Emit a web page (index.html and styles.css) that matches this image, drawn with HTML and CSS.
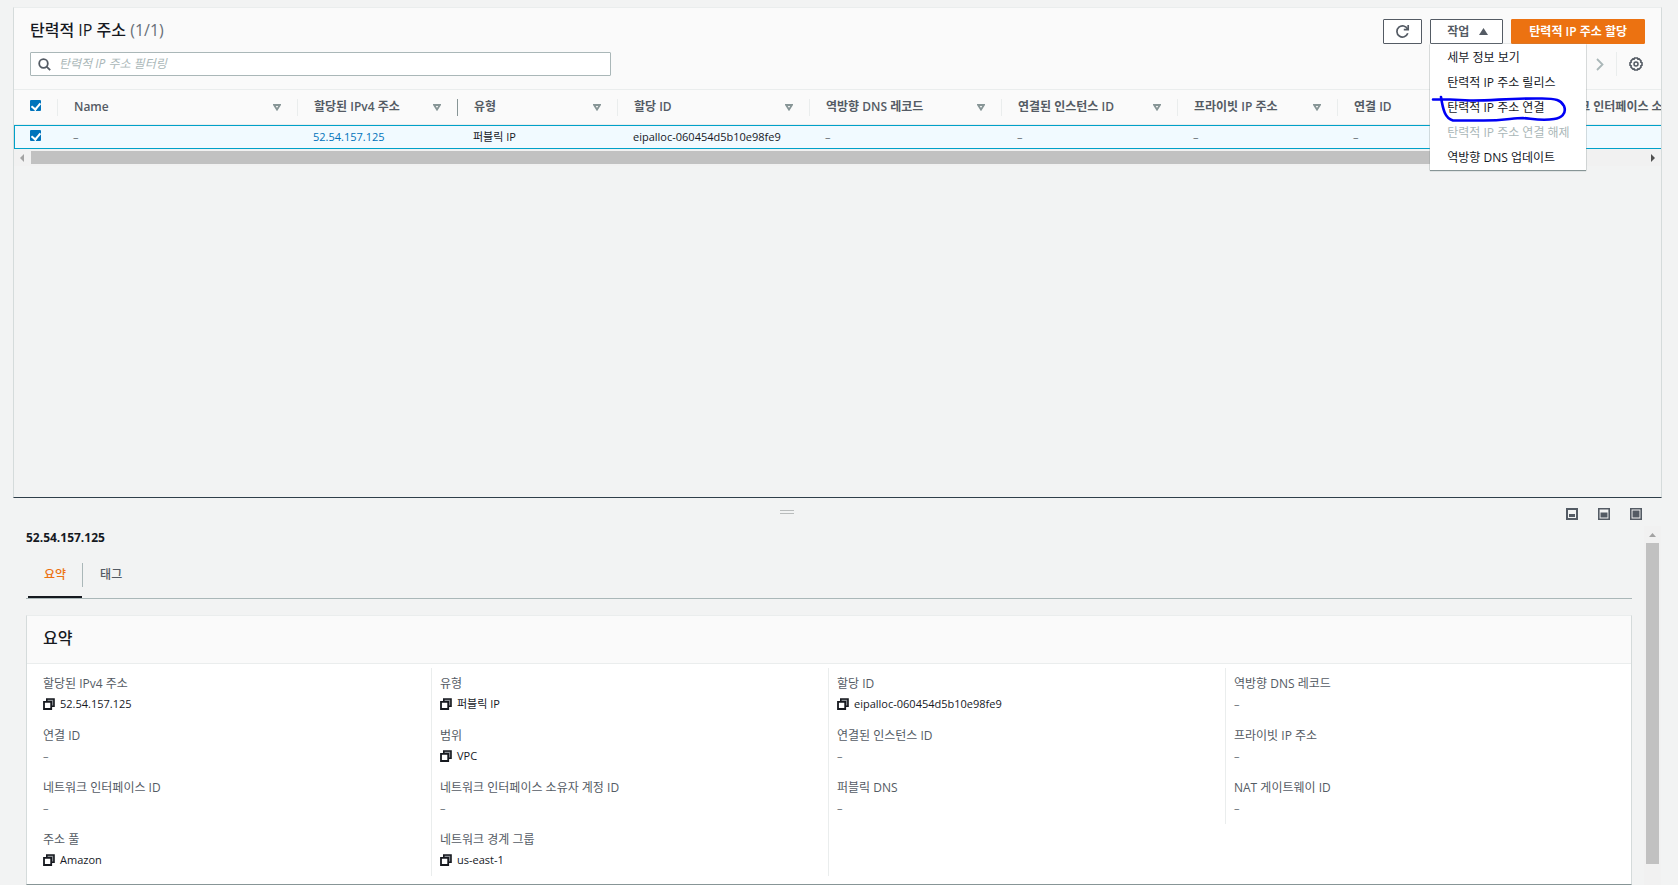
FILE: index.html
```
<!DOCTYPE html>
<html lang="ko">
<head>
  <meta charset="UTF-8">
  <meta name="viewport" content="width=device-width, initial-scale=1.0">
  <title>탄력적 IP 주소</title>
  <link rel="stylesheet" href="styles.css">
</head>
<body>
  <!-- shared icons -->
  <svg class="sprite" aria-hidden="true">
    <symbol id="icon-sort" viewBox="0 0 8 7">
      <path d="M1 1h6L4 5.600z" fill="none" stroke="currentColor" stroke-width="1.800"/>
    </symbol>
    <symbol id="icon-copy" viewBox="0 0 12 12">
      <path d="M3.500 1H11v7.500H8.500V3.500h-5z" fill="#8d9196"/>
      <path d="M3.800 3V1H11v7.300H9" fill="none" stroke="currentColor" stroke-width="1.600"/>
      <path d="M1 3.800h7.200V11H1z" fill="#fff" stroke="currentColor" stroke-width="1.800"/>
    </symbol>
  </svg>

  <main class="page">
    <section class="list-panel">
      <header class="list-header">
        <div class="header-row">
          <h1>탄력적 IP 주소 <span class="counter">(1/1)</span></h1>
          <div class="actions">
            <button class="btn btn-icon" aria-label="새로 고침">
              <svg width="15" height="15" viewBox="0 0 15 15" fill="none" stroke="currentColor" stroke-width="1.700">
                <path d="M12.800 9.300A5.600 5.600 0 1 1 12.600 5.100"/>
                <path d="M13.200 1v4.600H8.800"/>
              </svg>
            </button>
            <div class="dropdown">
              <button class="btn btn-menu" aria-expanded="true">작업
                <svg width="9" height="7" viewBox="0 0 9 7"><path d="M4.500 0L9 7H0z" fill="currentColor"/></svg>
              </button>
              <ul class="menu">
                <li><button>세부 정보 보기</button></li>
                <li><button>탄력적 IP 주소 릴리스</button></li>
                <li><button>탄력적 IP 주소 연결</button></li>
                <li><button disabled>탄력적 IP 주소 연결 해제</button></li>
                <li><button>역방향 DNS 업데이트</button></li>
              </ul>
              <svg class="pen-mark" width="140" height="28" viewBox="0 0 140 28" fill="none" stroke="#0000f5" stroke-width="2.600" stroke-linecap="round" stroke-linejoin="round">
                <path d="M3 4.500L20 4.500L40 5.500C60 6 80 3 112 3.500C126 3.500 131 5 134 11C137 19 131 23 124 24C112 26 104 24 93 23C82 23 72 26 50 25.500H23C15 23 13 15 11 2"/>
              </svg>
            </div>
            <button class="btn btn-primary">탄력적 IP 주소 할당</button>
          </div>
        </div>
        <div class="header-row">
          <div class="filter">
            <svg width="13" height="13" viewBox="0 0 13 13" fill="none" stroke="currentColor" stroke-width="1.800">
              <circle cx="5.500" cy="5.500" r="4.300"/>
              <path d="M8.600 8.600l3.600 3.600"/>
            </svg>
            <input type="text" placeholder="탄력적 IP 주소 필터링" aria-label="탄력적 IP 주소 필터링">
          </div>
          <div class="pager">
            <button class="plain next" aria-label="다음 페이지">
              <svg width="8" height="13" viewBox="0 0 8 13" fill="none" stroke="currentColor" stroke-width="1.800"><path d="M1 1l5.500 5.500L1 12"/></svg>
            </button>
            <button class="plain gear" aria-label="기본 설정">
              <svg width="14" height="14" viewBox="0 0 14 14" fill="none" stroke="currentColor">
                <path d="M5.600 1h2.800l.5 1.100 1.200-.2 2 2-.3 1.200 1.200.6v2.600l-1.200.6.3 1.200-2 2-1.200-.2-.5 1.100H5.600l-.5-1.100-1.200.2-2-2 .3-1.200L1 8.300V5.700l1.200-.6-.3-1.200 2-2 1.200.2z" stroke-width="1.600"/>
                <circle cx="7" cy="7" r="2" stroke-width="1.500"/>
              </svg>
            </button>
          </div>
        </div>
      </header>

      <div class="table-wrap">
        <table>
          <colgroup>
            <col class="w-check"><col class="w-name"><col class="w-s"><col class="w-s"><col class="w-l">
            <col class="w-l"><col class="w-m"><col class="w-s"><col class="w-l"><col class="w-name">
          </colgroup>
          <thead>
            <tr>
              <th class="check"><input type="checkbox" aria-label="모두 선택" checked></th>
              <th><div class="th-cell">Name <svg width="8" height="7"><use href="#icon-sort"/></svg></div></th>
              <th><div class="th-cell">할당된 IPv4 주소 <svg width="8" height="7"><use href="#icon-sort"/></svg></div></th>
              <th><div class="th-cell resizing">유형 <svg width="8" height="7"><use href="#icon-sort"/></svg></div></th>
              <th><div class="th-cell">할당 ID <svg width="8" height="7"><use href="#icon-sort"/></svg></div></th>
              <th><div class="th-cell">역방향 DNS 레코드 <svg width="8" height="7"><use href="#icon-sort"/></svg></div></th>
              <th><div class="th-cell">연결된 인스턴스 ID <svg width="8" height="7"><use href="#icon-sort"/></svg></div></th>
              <th><div class="th-cell">프라이빗 IP 주소 <svg width="8" height="7"><use href="#icon-sort"/></svg></div></th>
              <th><div class="th-cell">연결 ID <svg width="8" height="7"><use href="#icon-sort"/></svg></div></th>
              <th><div class="th-cell">네트워크 인터페이스 소유자 계정 ID</div></th>
            </tr>
          </thead>
          <tbody>
            <tr class="selected">
              <td class="check"><input type="checkbox" aria-label="52.54.157.125 선택" checked></td>
              <td class="empty">–</td>
              <td><a href="#">52.54.157.125</a></td>
              <td>퍼블릭 IP</td>
              <td>eipalloc-060454d5b10e98fe9</td>
              <td class="empty">–</td>
              <td class="empty">–</td>
              <td class="empty">–</td>
              <td class="empty">–</td>
              <td></td>
            </tr>
          </tbody>
        </table>
      </div>
      <div class="scroll-x">
        <svg width="17" height="17" viewBox="0 0 17 17"><path d="M10 5v8L6 9z" fill="#a3a3a3"/></svg>
        <div class="thumb"></div>
        <svg width="17" height="17" viewBox="0 0 17 17"><path d="M7 5v8l4-4z" fill="#505050"/></svg>
      </div>
    </section>

    <section class="split-panel">
      <div class="split-bar">
        <div class="handle-area"><span class="handle"></span></div>
        <div class="size-buttons">
          <button class="plain" aria-label="작게">
            <svg width="12" height="12" viewBox="0 0 12 12"><path d="M1 1h10v10H1z" fill="none" stroke="currentColor" stroke-width="2"/><path d="M3 6h6v3H3z" fill="currentColor"/></svg>
          </button>
          <button class="plain" aria-label="중간">
            <svg width="12" height="12" viewBox="0 0 12 12"><path d="M.8.8h10.400v10.400H.8z" fill="none" stroke="currentColor" stroke-width="1.600"/><path d="M2.500 4.500h7v5h-7z" fill="currentColor"/></svg>
          </button>
          <button class="plain" aria-label="크게">
            <svg width="12" height="12" viewBox="0 0 12 12"><path d="M.8.8h10.400v10.400H.8z" fill="none" stroke="currentColor" stroke-width="1.600"/><path d="M2.500 2.500h7v7h-7z" fill="currentColor"/></svg>
          </button>
        </div>
      </div>

      <div class="split-body">
        <div class="details">
          <h2>52.54.157.125</h2>
          <div class="tabs" role="tablist">
            <button class="tab active" role="tab" aria-selected="true">요약</button>
            <button class="tab" role="tab" aria-selected="false">태그</button>
          </div>

          <div class="card">
            <h3>요약</h3>
            <div class="columns">
              <dl>
                <div class="item"><dt>할당된 IPv4 주소</dt><dd><svg width="12" height="12"><use href="#icon-copy"/></svg>52.54.157.125</dd></div>
                <div class="item"><dt>연결 ID</dt><dd class="empty">–</dd></div>
                <div class="item"><dt>네트워크 인터페이스 ID</dt><dd class="empty">–</dd></div>
                <div class="item"><dt>주소 풀</dt><dd><svg width="12" height="12"><use href="#icon-copy"/></svg>Amazon</dd></div>
              </dl>
              <dl>
                <div class="item"><dt>유형</dt><dd><svg width="12" height="12"><use href="#icon-copy"/></svg>퍼블릭 IP</dd></div>
                <div class="item"><dt>범위</dt><dd><svg width="12" height="12"><use href="#icon-copy"/></svg>VPC</dd></div>
                <div class="item"><dt>네트워크 인터페이스 소유자 계정 ID</dt><dd class="empty">–</dd></div>
                <div class="item"><dt>네트워크 경계 그룹</dt><dd><svg width="12" height="12"><use href="#icon-copy"/></svg>us-east-1</dd></div>
              </dl>
              <dl class="tall">
                <div class="item"><dt>할당 ID</dt><dd><svg width="12" height="12"><use href="#icon-copy"/></svg>eipalloc-060454d5b10e98fe9</dd></div>
                <div class="item"><dt>연결된 인스턴스 ID</dt><dd class="empty">–</dd></div>
                <div class="item"><dt>퍼블릭 DNS</dt><dd class="empty">–</dd></div>
              </dl>
              <dl>
                <div class="item"><dt>역방향 DNS 레코드</dt><dd class="empty">–</dd></div>
                <div class="item"><dt>프라이빗 IP 주소</dt><dd class="empty">–</dd></div>
                <div class="item"><dt>NAT 게이트웨이 ID</dt><dd class="empty">–</dd></div>
              </dl>
            </div>
          </div>
        </div>
        <div class="scroll-y">
          <svg width="17" height="17" viewBox="0 0 17 17"><path d="M5 11h7L8.500 7z" fill="#a3a3a3"/></svg>
          <div class="thumb"></div>
        </div>
      </div>
    </section>
  </main>
</body>
</html>
```
FILE: styles.css
```
* {
  box-sizing: border-box;
}

body {
  margin: 0;
  background-color: #f2f3f3;
  color: #16191f;
  font-family: "Open Sans", "Noto Sans CJK KR", sans-serif;
  font-size: 12px;
  line-height: 16px;
}

h1, h2, h3, ul, dl, dd {
  margin: 0;
  padding: 0;
}

svg {
  display: block;
  flex: none;
}

button, input {
  font: inherit;
  color: inherit;
}

button {
  cursor: pointer;
}

.sprite {
  position: absolute;
  width: 0;
  height: 0;
}

.page {
  padding: 7px 16px 0 13px;
}

/* list */
.list-panel {
  display: flex;
  flex-direction: column;
  min-height: 491px;
  border: 1px solid #d5dbdb;
  border-top-color: #eaeded;
  border-bottom-color: #2f3f4a;
}

.list-header {
  display: flex;
  flex-direction: column;
  gap: 8px;
  padding: 11px 16px 13px;
  background-color: #fafafa;
  border-bottom: 1px solid #eaeded;
}

.header-row {
  display: flex;
  justify-content: space-between;
  align-items: flex-start;
}

h1, h3 {
  font-size: 16px;
  font-weight: 500;
  line-height: 22px;
}

.counter {
  color: #687078;
  font-weight: 400;
}

.actions {
  display: flex;
  gap: 8px;
}

.btn {
  display: flex;
  align-items: center;
  justify-content: center;
  height: 25px;
  padding: 0 17px;
  border: 1px solid #545b64;
  border-radius: 1px;
  background-color: #fff;
  color: #545b64;
  font-weight: 600;
}

.btn-icon {
  padding: 0 11px;
}

.btn-menu {
  gap: 10px;
  padding: 0 14px 0 16px;
}

.btn-primary {
  border-color: #ec7211;
  background-color: #ec7211;
  color: #fff;
}

.dropdown {
  position: relative;
}

.menu {
  position: absolute;
  top: 100%;
  left: 0;
  z-index: 1;
  width: 156px;
  padding-top: 1px;
  list-style: none;
  background-color: #fff;
  box-shadow: 0 1px 1px #879596, 0 0 1px #879596;
}

.menu button {
  display: block;
  width: 100%;
  height: 25px;
  padding: 0 17px;
  border: 0;
  background: none;
  text-align: left;
  white-space: nowrap;
}

.menu button:disabled {
  color: #aab7b8;
  cursor: default;
}

.pen-mark {
  position: absolute;
  top: 76px;
  left: 0;
  z-index: 2;
  pointer-events: none;
}

.filter {
  display: flex;
  align-items: center;
  gap: 8px;
  width: 36%;
  height: 24px;
  padding: 0 7px;
  border: 1px solid #aab7b8;
  border-radius: 1px;
  background-color: #fff;
  color: #545b64;
}

.filter input {
  flex: 1;
  min-width: 0;
  padding: 0;
  border: 0;
  outline: 0;
  background: none;
}

.filter input::placeholder {
  color: #aab7b8;
  font-style: italic;
}

.pager {
  display: flex;
  align-items: center;
}

.plain {
  padding: 0;
  border: 0;
  background: none;
  color: #545b64;
}

.next {
  padding-right: 12px;
  color: #aab7b8;
}

.gear {
  padding: 5px 2px 5px 12px;
  border-left: 1px solid #eaeded;
}

/* table */
.table-wrap {
  overflow: hidden;
}

table {
  width: 1755px;
  table-layout: fixed;
  border-collapse: separate;
  border-spacing: 0;
}

.w-check { width: 43px; }
.w-name { width: 240px; }
.w-s { width: 160px; }
.w-m { width: 176px; }
.w-l { width: 192px; }

th {
  height: 35px;
  padding: 0;
  border-bottom: 1px solid #eaeded;
  background-color: #fafafa;
  color: #545b64;
  font-weight: 600;
  text-align: left;
}

.th-cell {
  display: flex;
  align-items: center;
  justify-content: space-between;
  height: 17px;
  padding: 0 16px;
  border-left: 1px solid #eaeded;
  white-space: nowrap;
}

.th-cell svg {
  color: #879596;
}

.th-cell.resizing {
  border-left-color: #879596;
}

td {
  height: 24px;
  padding: 0 16px;
  border: solid #00a1c9;
  border-width: 1px 0;
  background-color: #f1faff;
  font-size: 11px;
  white-space: nowrap;
}

td:first-child {
  border-left-width: 1px;
}

.check {
  padding-left: 16px;
}

td.check {
  padding-left: 15px;
}

.check input {
  appearance: none;
  display: block;
  width: 11px;
  height: 11px;
  margin: 0 0 3px;
  border-radius: 1px;
  background-color: #0073bb;
}

.check input:checked::before {
  content: "";
  display: block;
  width: 4px;
  height: 7px;
  margin: 0 auto;
  border: solid #fff;
  border-width: 0 2px 2px 0;
  transform: translateY(1px) rotate(40deg);
}

td a {
  color: #0073bb;
  text-decoration: none;
}

.empty {
  color: #687078;
}

/* scrollbars */
.scroll-x {
  display: flex;
  height: 17px;
  background-color: #f1f1f1;
}

.scroll-x .thumb {
  flex: 1;
  margin: 2px 10% 2px 0;
  background-color: #c1c1c1;
}

.scroll-y {
  display: flex;
  flex-direction: column;
  width: 17px;
  background-color: #f1f1f1;
}

.scroll-y .thumb {
  flex: 1;
  margin: 0 2px 21px;
  background-color: #c1c1c1;
}

/* split panel */
.split-panel {
  padding-right: 1px;
}

.split-bar {
  display: flex;
  align-items: center;
  height: 28px;
}

.handle-area {
  display: flex;
  flex: 1;
  justify-content: center;
  padding-right: 5px;
}

.handle {
  width: 14px;
  height: 4px;
  border: solid #b9bcbc;
  border-width: 1px 0;
}

.size-buttons {
  display: flex;
  gap: 20px;
  padding: 4px 19px 0 0;
}

.split-body {
  display: flex;
}

.details {
  flex: 1;
  min-width: 0;
  padding: 4px 12px 0 13px;
}

h2 {
  font-size: 12px;
  font-weight: 700;
  line-height: 16px;
}

.tabs {
  display: flex;
  margin: 12px 0 16px;
  padding-left: 2px;
  border-bottom: 1px solid #aab7b8;
}

.tab {
  position: relative;
  height: 40px;
  padding: 0 18px 6px;
  border: 0;
  background: none;
  color: #545b64;
  font-weight: 500;
}

.tab.active {
  border-bottom: 2px solid #16191f;
  padding: 0 16px 4px;
  color: #ec7211;
}

/* divider between the tabs */
.tab.active::after {
  content: "";
  position: absolute;
  top: 5px;
  right: -1px;
  width: 1px;
  height: 24px;
  background-color: #aab7b8;
}

.card {
  border: 1px solid #d5dbdb;
  border-top-color: #eaeded;
  border-bottom-color: #879596;
  background-color: #fff;
}

h3 {
  padding: 11px 16px 14px;
  border-bottom: 1px solid #eaeded;
  background-color: #fafafa;
}

.columns {
  display: grid;
  grid-template-columns: repeat(4, 1fr);
  align-items: start;
  padding: 4px 9px 8px 7px;
}

dl {
  border-left: 1px solid #eaeded;
}

dl:first-child {
  border-left-color: transparent;
}

dl.tall {
  align-self: stretch;
}

.item {
  padding: 8px;
}

dt {
  color: #545b64;
}

dd {
  display: flex;
  align-items: center;
  gap: 5px;
  margin-top: 4px;
  font-size: 11px;
}
```
